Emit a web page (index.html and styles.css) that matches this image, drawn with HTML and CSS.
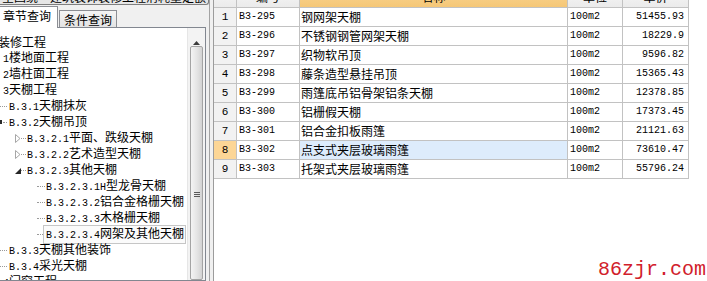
FILE: index.html
```html
<!DOCTYPE html>
<html>
<head>
    <title>定额查询</title>
    <link rel="stylesheet" href="styles.css">
</head>
<body>
    <div class="app">
        <div class="left-panel">
            <div class="combo"><span>全国统一建筑装饰装修工程消耗量定额</span></div>

            <div class="tabs">
                <div class="tab active">章节查询</div>
                <div class="tab">条件查询</div>
            </div>

            <div class="tree-box">
                <div class="tree">
                    <div class="node l0"><span class="label">装修工程</span></div>
                    <div class="node l1"><span class="label"><span class="m">1</span>楼地面工程</span></div>
                    <div class="node l1"><span class="label"><span class="m">2</span>墙柱面工程</span></div>
                    <div class="node l1"><span class="label"><span class="m">3</span>天棚工程</span></div>
                    <div class="node l2"><i class="dots w7"></i><span class="label"><span class="m">B.3.1</span>天棚抹灰</span></div>
                    <div class="node l2"><i class="tri-cut"></i><i class="dots w4"></i><span class="label"><span class="m">B.3.2</span>天棚吊顶</span></div>
                    <div class="node l3">
                        <i class="exp"><svg width="6" height="9" viewBox="0 0 6 9"><path d="M0.5 0.5 L5 4.5 L0.5 8.5 Z" fill="#fff" stroke="#a6a6a6"/></svg></i>
                        <i class="dots w5"></i><span class="label"><span class="m">B.3.2.1</span>平面、跌级天棚</span>
                    </div>
                    <div class="node l3">
                        <i class="exp"><svg width="6" height="9" viewBox="0 0 6 9"><path d="M0.5 0.5 L5 4.5 L0.5 8.5 Z" fill="#fff" stroke="#a6a6a6"/></svg></i>
                        <i class="dots w5"></i><span class="label"><span class="m">B.3.2.2</span>艺术造型天棚</span>
                    </div>
                    <div class="node l3">
                        <i class="exp"><svg width="6" height="9" viewBox="0 0 6 9"><path d="M6 2 L6 8 L0 8 Z" fill="#262626"/></svg></i>
                        <i class="dots w5"></i><span class="label"><span class="m">B.3.2.3</span>其他天棚</span>
                    </div>
                    <div class="node l4"><i class="dots w8"></i><span class="label"><span class="m">B.3.2.3.1H</span>型龙骨天棚</span></div>
                    <div class="node l4"><i class="dots w8"></i><span class="label"><span class="m">B.3.2.3.2</span>铝合金格栅天棚</span></div>
                    <div class="node l4"><i class="dots w8"></i><span class="label"><span class="m">B.3.2.3.3</span>木格栅天棚</span></div>
                    <div class="node l4"><i class="dots w8"></i><span class="label sel"><span class="m">B.3.2.3.4</span>网架及其他天棚</span></div>
                    <div class="node l2"><i class="dots w7"></i><span class="label"><span class="m">B.3.3</span>天棚其他装饰</span></div>
                    <div class="node l2"><i class="dots w7"></i><span class="label"><span class="m">B.3.4</span>采光天棚</span></div>
                    <div class="node l1"><span class="label"><span class="m">4</span>门窗工程</span></div>
                </div>

                <div class="scrollbar">
                    <div class="sb-up"><svg width="7" height="4" viewBox="0 0 7 4"><path d="M3.5 0 L7 4 L0 4 Z" fill="#3c3c3c"/></svg></div>
                    <div class="sb-thumb"><span class="grip"></span></div>
                </div>
            </div>
        </div>

        <div class="splitter"></div>

        <div class="right-panel">
            <div class="grid">
                <div class="row head">
                    <div class="cell c-no"></div>
                    <div class="cell c-code">编号</div>
                    <div class="cell c-name">名称</div>
                    <div class="cell c-unit">单位</div>
                    <div class="cell c-price">单价</div>
                </div>
                <div class="row">
                    <div class="cell c-no">1</div>
                    <div class="cell c-code">B3-295</div>
                    <div class="cell c-name">钢网架天棚</div>
                    <div class="cell c-unit">100m2</div>
                    <div class="cell c-price">51455.93</div>
                </div>
                <div class="row">
                    <div class="cell c-no">2</div>
                    <div class="cell c-code">B3-296</div>
                    <div class="cell c-name">不锈钢钢管网架天棚</div>
                    <div class="cell c-unit">100m2</div>
                    <div class="cell c-price">18229.9</div>
                </div>
                <div class="row">
                    <div class="cell c-no">3</div>
                    <div class="cell c-code">B3-297</div>
                    <div class="cell c-name">织物软吊顶</div>
                    <div class="cell c-unit">100m2</div>
                    <div class="cell c-price">9596.82</div>
                </div>
                <div class="row">
                    <div class="cell c-no">4</div>
                    <div class="cell c-code">B3-298</div>
                    <div class="cell c-name">藤条造型悬挂吊顶</div>
                    <div class="cell c-unit">100m2</div>
                    <div class="cell c-price">15365.43</div>
                </div>
                <div class="row">
                    <div class="cell c-no">5</div>
                    <div class="cell c-code">B3-299</div>
                    <div class="cell c-name">雨篷底吊铝骨架铝条天棚</div>
                    <div class="cell c-unit">100m2</div>
                    <div class="cell c-price">12378.85</div>
                </div>
                <div class="row">
                    <div class="cell c-no">6</div>
                    <div class="cell c-code">B3-300</div>
                    <div class="cell c-name">铝栅假天棚</div>
                    <div class="cell c-unit">100m2</div>
                    <div class="cell c-price">17373.45</div>
                </div>
                <div class="row">
                    <div class="cell c-no">7</div>
                    <div class="cell c-code">B3-301</div>
                    <div class="cell c-name">铝合金扣板雨篷</div>
                    <div class="cell c-unit">100m2</div>
                    <div class="cell c-price">21121.63</div>
                </div>
                <div class="row current">
                    <div class="cell c-no">8</div>
                    <div class="cell c-code">B3-302</div>
                    <div class="cell c-name">点支式夹层玻璃雨篷</div>
                    <div class="cell c-unit">100m2</div>
                    <div class="cell c-price">73610.47</div>
                </div>
                <div class="row">
                    <div class="cell c-no">9</div>
                    <div class="cell c-code">B3-303</div>
                    <div class="cell c-name">托架式夹层玻璃雨篷</div>
                    <div class="cell c-unit">100m2</div>
                    <div class="cell c-price">55796.24</div>
                </div>
            </div>
        </div>

        <div class="watermark">86zjr.com</div>
    </div>
</body>
</html>
```

FILE: styles.css
```css
body {
    margin: 0;
    font-family: "Noto Sans CJK SC", sans-serif;
    font-size: 12px;
    color: #000;
    background-color: #fff;
    overflow: hidden;
}

.app {
    position: relative;
    display: flex;
    width: 707px;
    height: 281px;
    overflow: hidden;
}

/* monospace latin, like the old song-ti half width glyphs */
.m {
    font-family: "Liberation Mono", monospace;
    font-size: 10px;
}

/* left side: chapter tree */
.left-panel {
    width: 214px;
    margin-left: -4px;
    padding-right: 3px;
    box-sizing: border-box;
    display: flex;
    flex-direction: column;
    background-color: #f0f0f0;
    border-right: 1px solid #a3a3a3;
    flex-shrink: 0;
}

.combo {
    height: 5px;
    margin-right: -3px;
    box-sizing: border-box;
    overflow: hidden;
    background-color: #e6e6e6;
    border: 1px solid #7f7f7f;
    border-top: none;
    border-radius: 0 0 3px 3px;
}

.combo span {
    display: block;
    margin-top: -10px;
    padding-left: 5px;
    line-height: 14px;
    white-space: nowrap;
}

.tabs {
    display: flex;
    align-items: flex-end;
    height: 22px;
}

.tab {
    box-sizing: border-box;
    height: 17px;
    line-height: 17px;
    padding: 0 4px;
    border: 1px solid #8c8e94;
    border-bottom: none;
    background: linear-gradient(#f4f4f4, #e3e3e3);
    white-space: nowrap;
}

.tab.active {
    position: relative;
    z-index: 1;
    height: 22px;
    line-height: 18px;
    margin-bottom: -1px;
    padding: 0 6px;
    background: #fff;
    margin-right: 1px;
}

.tree-box {
    flex: 1;
    display: flex;
    min-height: 0;
    background-color: #fff;
    border: 1px solid #828790;
}

.tree {
    flex: 1;
    padding-top: 6px;
    overflow: hidden;
}

.node {
    display: flex;
    align-items: center;
    height: 16px;
    line-height: 16px;
    white-space: nowrap;
}

.l0 { padding-left: 0; }
.l1 { padding-left: 5px; }
.l2 { padding-left: 3px; }
.l3 { padding-left: 17px; }
.l4 { padding-left: 40px; }

.dots {
    display: inline-block;
    height: 0;
    border-top: 1px dotted #9a9a9a;
}

.w4 { width: 4px; }
.w5 { width: 5px; }
.w7 { width: 7px; }
.w8 { width: 8px; }

.label {
    margin-left: 1px;
}

.l2 .label {
    margin-left: 2px;
}

.label.sel {
    margin-left: -2px;
    padding: 0 1px 0 2px;
    line-height: 14px;
    border: 1px solid #c6c6c6;
    background-color: #fbfbfb;
}

.exp {
    display: inline-flex;
    align-items: center;
    justify-content: center;
    width: 7px;
    height: 16px;
}

.tri-cut {
    display: inline-block;
    width: 2px;
    height: 4px;
    margin-right: 1px;
    background-color: #2a2a2a;
}

.scrollbar {
    width: 17px;
    display: flex;
    flex-direction: column;
    align-items: center;
    background-color: #f3f3f3;
    border-left: 1px solid #e6e6e6;
}

.sb-up {
    height: 22px;
    box-sizing: border-box;
    padding-top: 12px;
    line-height: 0;
}

.sb-thumb {
    width: 13px;
    height: 300px;
    box-sizing: border-box;
    padding-top: 145px;
    display: flex;
    justify-content: center;
    border: 1px solid #a4a4a4;
    border-radius: 2px;
    background: linear-gradient(to right, #f4f4f4, #e4e4e4 55%, #d3d3d3);
}

.grip {
    width: 6px;
    height: 5px;
    background: repeating-linear-gradient(to bottom, #5a5a5a 0 1px, transparent 1px 2px);
}

.splitter {
    width: 3px;
    background-color: #f0f0f0;
    flex-shrink: 0;
}

/* right side: quota grid */
.right-panel {
    flex: 1;
    background-color: #fff;
    border-left: 1px solid #9c9c9c;
}

.grid {
    margin-top: -12px;
    width: 475px;
}

.row {
    display: flex;
    height: 19px;
    box-sizing: border-box;
    border-bottom: 1px solid #c2c2c2;
}

.row.head {
    height: 20px;
}

.cell {
    box-sizing: border-box;
    border-right: 1px solid #c2c2c2;
    line-height: 18px;
    white-space: nowrap;
    overflow: hidden;
}

.c-no {
    width: 23px;
    text-align: center;
    background-color: #f2f2f2;
    font-family: "Liberation Mono", monospace;
    font-size: 11px;
}

.c-code {
    width: 63px;
    padding-left: 2px;
    font-family: "Liberation Mono", monospace;
    font-size: 10px;
}

.c-name {
    width: 268px;
    padding-left: 1px;
}

.c-unit {
    width: 55px;
    padding-left: 2px;
    font-family: "Liberation Mono", monospace;
    font-size: 10px;
}

.c-price {
    width: 66px;
    padding-right: 4px;
    text-align: right;
    font-family: "Liberation Mono", monospace;
    font-size: 10px;
}

.head .cell {
    text-align: center;
    padding: 0;
    font-family: "Noto Sans CJK SC", sans-serif;
    font-size: 12px;
    background: linear-gradient(#f7f7f7, #ebebeb);
}

.head .c-name {
    background: linear-gradient(#f9d592, #f5c777);
}

.current .c-no {
    background-color: #fcd696;
}

.current .c-name {
    background-color: #ddecfc;
}

.watermark {
    position: absolute;
    right: 1px;
    bottom: 0;
    color: #d1202b;
    font-family: "Liberation Mono", monospace;
    font-size: 20px;
    line-height: 22px;
}
```
